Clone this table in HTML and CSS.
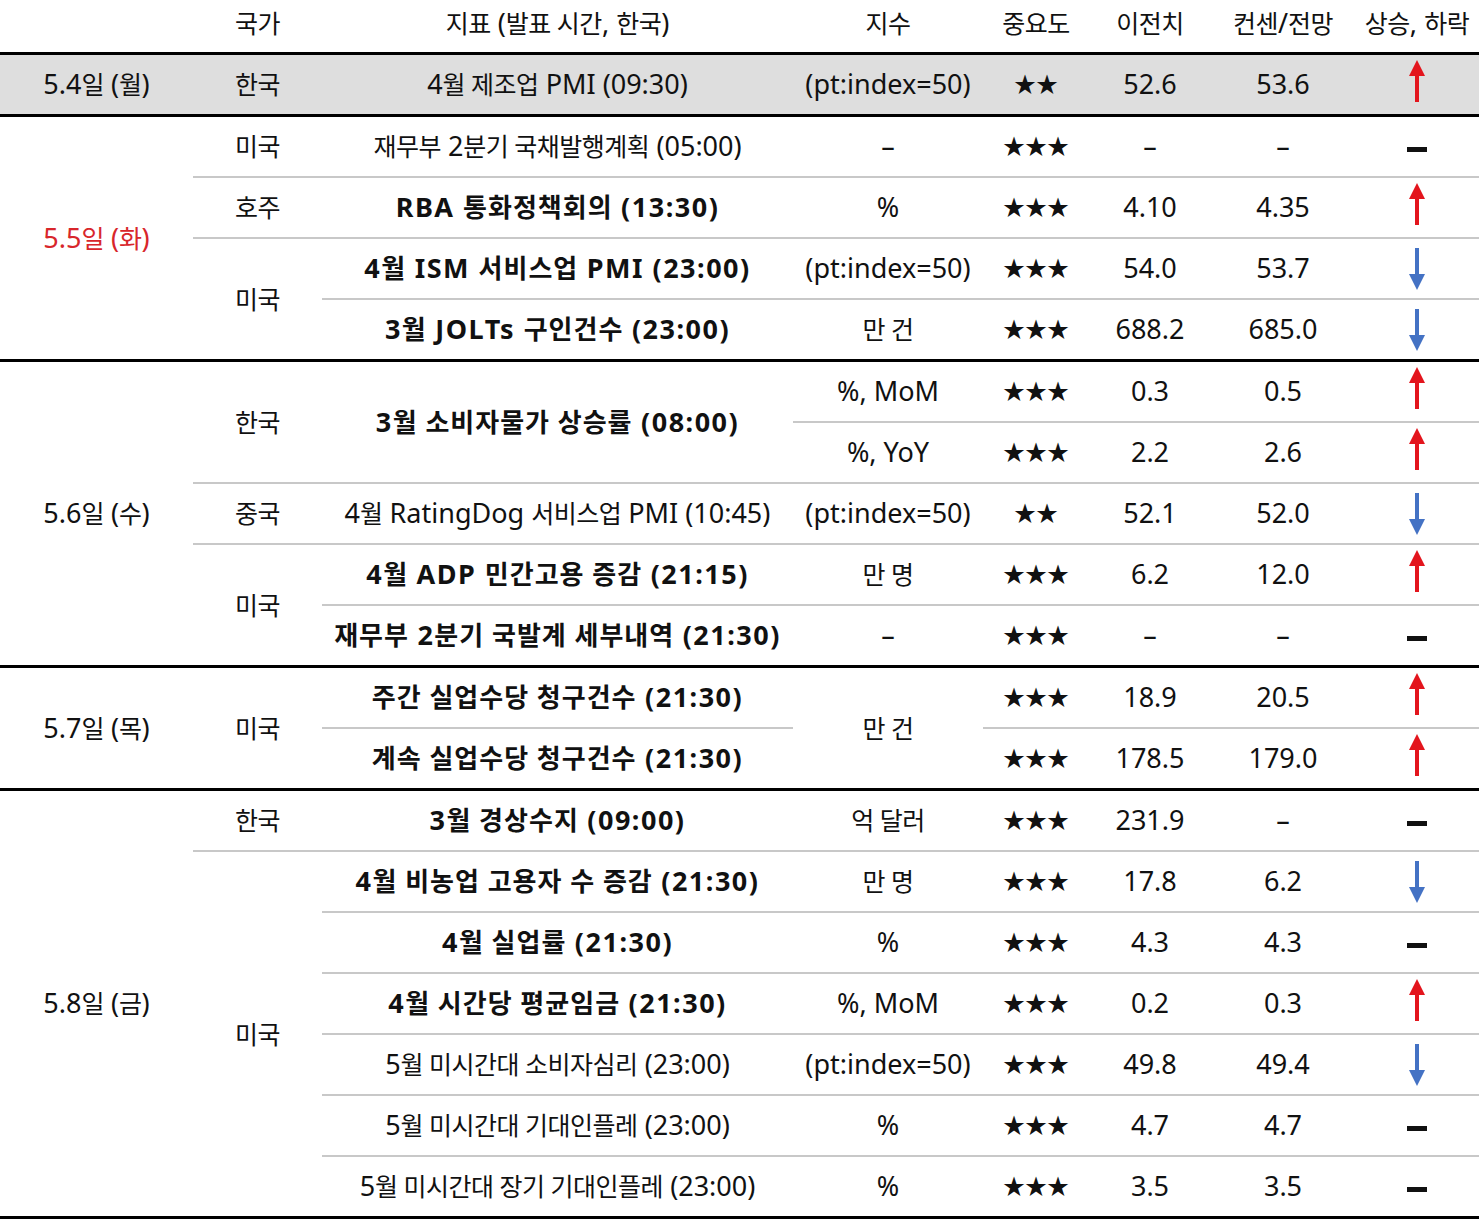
FILE: index.html
```html
<!DOCTYPE html>
<html lang="ko">
<head>
<meta charset="utf-8">
<title>주간 경제지표 일정</title>
<link rel="stylesheet" href="styles.css">
</head>
<body>
<table class="cal">
  <colgroup>
    <col class="c-date"><col class="c-cty"><col class="c-ind"><col class="c-unit"><col class="c-imp"><col class="c-prev"><col class="c-cons"><col class="c-dir">
  </colgroup>
  <thead>
    <tr>
      <th></th>
      <th><span class="k">국가</span></th>
      <th><span class="k">지표</span> (<span class="k">발표 시간</span>, <span class="k">한국</span>)</th>
      <th><span class="k">지수</span></th>
      <th><span class="k">중요도</span></th>
      <th><span class="k">이전치</span></th>
      <th><span class="k">컨센</span>/<span class="k">전망</span></th>
      <th><span class="k">상승</span>, <span class="k">하락</span></th>
    </tr>
  </thead>

  <tbody class="gray">
    <tr>
      <td>5.4<span class="k">일</span> (<span class="k">월</span>)</td>
      <td><span class="k">한국</span></td>
      <td>4<span class="k">월 제조업</span> PMI (09:30)</td>
      <td>(pt:index=50)</td>
      <td class="st">★★</td>
      <td>52.6</td>
      <td>53.6</td>
      <td><svg class="arr up" viewBox="0 0 20 42"><path d="M10 0 L18 16 L12 16 L12 42 L8 42 L8 16 L2 16 Z"/></svg></td>
    </tr>
  </tbody>

  <tbody>
    <tr>
      <td rowspan="4" class="red">5.5<span class="k">일</span> (<span class="k">화</span>)</td>
      <td><span class="k">미국</span></td>
      <td><span class="k">재무부</span> 2<span class="k">분기 국채발행계획</span> (05:00)</td>
      <td>–</td>
      <td class="st">★★★</td>
      <td>–</td>
      <td>–</td>
      <td><span class="dash"></span></td>
    </tr>
    <tr>
      <td><span class="k">호주</span></td>
      <td class="b">RBA <span class="k">통화정책회의</span> (13:30)</td>
      <td>%</td>
      <td class="st">★★★</td>
      <td>4.10</td>
      <td>4.35</td>
      <td><svg class="arr up" viewBox="0 0 20 42"><path d="M10 0 L18 16 L12 16 L12 42 L8 42 L8 16 L2 16 Z"/></svg></td>
    </tr>
    <tr>
      <td rowspan="2"><span class="k">미국</span></td>
      <td class="b">4<span class="k">월</span> ISM <span class="k">서비스업</span> PMI (23:00)</td>
      <td>(pt:index=50)</td>
      <td class="st">★★★</td>
      <td>54.0</td>
      <td>53.7</td>
      <td><svg class="arr down" viewBox="0 0 20 42"><path d="M10 42 L18 26 L12 26 L12 0 L8 0 L8 26 L2 26 Z"/></svg></td>
    </tr>
    <tr>
      <td class="b">3<span class="k">월</span> JOLTs <span class="k">구인건수</span> (23:00)</td>
      <td><span class="k">만 건</span></td>
      <td class="st">★★★</td>
      <td>688.2</td>
      <td>685.0</td>
      <td><svg class="arr down" viewBox="0 0 20 42"><path d="M10 42 L18 26 L12 26 L12 0 L8 0 L8 26 L2 26 Z"/></svg></td>
    </tr>
  </tbody>

  <tbody>
    <tr>
      <td rowspan="5">5.6<span class="k">일</span> (<span class="k">수</span>)</td>
      <td rowspan="2"><span class="k">한국</span></td>
      <td rowspan="2" class="b">3<span class="k">월 소비자물가 상승률</span> (08:00)</td>
      <td>%, MoM</td>
      <td class="st">★★★</td>
      <td>0.3</td>
      <td>0.5</td>
      <td><svg class="arr up" viewBox="0 0 20 42"><path d="M10 0 L18 16 L12 16 L12 42 L8 42 L8 16 L2 16 Z"/></svg></td>
    </tr>
    <tr>
      <td>%, YoY</td>
      <td class="st">★★★</td>
      <td>2.2</td>
      <td>2.6</td>
      <td><svg class="arr up" viewBox="0 0 20 42"><path d="M10 0 L18 16 L12 16 L12 42 L8 42 L8 16 L2 16 Z"/></svg></td>
    </tr>
    <tr>
      <td><span class="k">중국</span></td>
      <td>4<span class="k">월</span> RatingDog <span class="k">서비스업</span> PMI (10:45)</td>
      <td>(pt:index=50)</td>
      <td class="st">★★</td>
      <td>52.1</td>
      <td>52.0</td>
      <td><svg class="arr down" viewBox="0 0 20 42"><path d="M10 42 L18 26 L12 26 L12 0 L8 0 L8 26 L2 26 Z"/></svg></td>
    </tr>
    <tr>
      <td rowspan="2"><span class="k">미국</span></td>
      <td class="b">4<span class="k">월</span> ADP <span class="k">민간고용 증감</span> (21:15)</td>
      <td><span class="k">만 명</span></td>
      <td class="st">★★★</td>
      <td>6.2</td>
      <td>12.0</td>
      <td><svg class="arr up" viewBox="0 0 20 42"><path d="M10 0 L18 16 L12 16 L12 42 L8 42 L8 16 L2 16 Z"/></svg></td>
    </tr>
    <tr>
      <td class="b"><span class="k">재무부</span> 2<span class="k">분기 국발계 세부내역</span> (21:30)</td>
      <td>–</td>
      <td class="st">★★★</td>
      <td>–</td>
      <td>–</td>
      <td><span class="dash"></span></td>
    </tr>
  </tbody>

  <tbody>
    <tr>
      <td rowspan="2">5.7<span class="k">일</span> (<span class="k">목</span>)</td>
      <td rowspan="2"><span class="k">미국</span></td>
      <td class="b"><span class="k">주간 실업수당 청구건수</span> (21:30)</td>
      <td rowspan="2"><span class="k">만 건</span></td>
      <td class="st">★★★</td>
      <td>18.9</td>
      <td>20.5</td>
      <td><svg class="arr up" viewBox="0 0 20 42"><path d="M10 0 L18 16 L12 16 L12 42 L8 42 L8 16 L2 16 Z"/></svg></td>
    </tr>
    <tr>
      <td class="b"><span class="k">계속 실업수당 청구건수</span> (21:30)</td>
      <td class="st">★★★</td>
      <td>178.5</td>
      <td>179.0</td>
      <td><svg class="arr up" viewBox="0 0 20 42"><path d="M10 0 L18 16 L12 16 L12 42 L8 42 L8 16 L2 16 Z"/></svg></td>
    </tr>
  </tbody>

  <tbody class="last">
    <tr>
      <td rowspan="7">5.8<span class="k">일</span> (<span class="k">금</span>)</td>
      <td><span class="k">한국</span></td>
      <td class="b">3<span class="k">월 경상수지</span> (09:00)</td>
      <td><span class="k">억 달러</span></td>
      <td class="st">★★★</td>
      <td>231.9</td>
      <td>–</td>
      <td><span class="dash"></span></td>
    </tr>
    <tr>
      <td rowspan="6"><span class="k">미국</span></td>
      <td class="b">4<span class="k">월 비농업 고용자 수 증감</span> (21:30)</td>
      <td><span class="k">만 명</span></td>
      <td class="st">★★★</td>
      <td>17.8</td>
      <td>6.2</td>
      <td><svg class="arr down" viewBox="0 0 20 42"><path d="M10 42 L18 26 L12 26 L12 0 L8 0 L8 26 L2 26 Z"/></svg></td>
    </tr>
    <tr>
      <td class="b">4<span class="k">월 실업률</span> (21:30)</td>
      <td>%</td>
      <td class="st">★★★</td>
      <td>4.3</td>
      <td>4.3</td>
      <td><span class="dash"></span></td>
    </tr>
    <tr>
      <td class="b">4<span class="k">월 시간당 평균임금</span> (21:30)</td>
      <td>%, MoM</td>
      <td class="st">★★★</td>
      <td>0.2</td>
      <td>0.3</td>
      <td><svg class="arr up" viewBox="0 0 20 42"><path d="M10 0 L18 16 L12 16 L12 42 L8 42 L8 16 L2 16 Z"/></svg></td>
    </tr>
    <tr>
      <td>5<span class="k">월 미시간대 소비자심리</span> (23:00)</td>
      <td>(pt:index=50)</td>
      <td class="st">★★★</td>
      <td>49.8</td>
      <td>49.4</td>
      <td><svg class="arr down" viewBox="0 0 20 42"><path d="M10 42 L18 26 L12 26 L12 0 L8 0 L8 26 L2 26 Z"/></svg></td>
    </tr>
    <tr>
      <td>5<span class="k">월 미시간대 기대인플레</span> (23:00)</td>
      <td>%</td>
      <td class="st">★★★</td>
      <td>4.7</td>
      <td>4.7</td>
      <td><span class="dash"></span></td>
    </tr>
    <tr>
      <td>5<span class="k">월 미시간대 장기 기대인플레</span> (23:00)</td>
      <td>%</td>
      <td class="st">★★★</td>
      <td>3.5</td>
      <td>3.5</td>
      <td><span class="dash"></span></td>
    </tr>
  </tbody>
</table>
</body>
</html>
```

FILE: styles.css
```css
html, body {
  margin: 0;
  padding: 0;
  background: #ffffff;
}

body {
  font-family: "Noto Sans", "Noto Sans CJK KR", sans-serif;
  color: #111111;
}

.cal {
  width: 1479px;
  border-collapse: collapse;
  table-layout: fixed;
}

.c-date { width: 193px; }
.c-cty  { width: 129px; }
.c-ind  { width: 471px; }
.c-unit { width: 190px; }
.c-imp  { width: 106px; }
.c-prev { width: 122px; }
.c-cons { width: 144px; }
.c-dir  { width: 124px; }

.cal th,
.cal td {
  padding: 0;
  text-align: center;
  vertical-align: middle;
  font-size: 27px;
  font-weight: 400;
  line-height: 1.2;
  white-space: nowrap;
}

.cal th {
  height: 46px;
  padding-bottom: 6px;
}

.cal td {
  height: 59px;
  border-bottom: 2px solid #c8c8c8;
}

.cal thead {
  border-bottom: 3px solid #000000;
}

.cal tbody {
  border-bottom: 3px solid #000000;
}

.cal tbody.last {
  border-bottom: 5px solid #000000;
}

.cal tbody.gray td {
  background: #dedede;
}

.k {
  font-size: 25px;
  letter-spacing: -0.5px;
}

.cal td.b {
  font-weight: 700;
  letter-spacing: 1.5px;
}

.cal td.b .k {
  font-size: 26px;
  letter-spacing: 1px;
}

.red {
  color: #d8262b;
}

.cal td.st {
  font-family: "Noto Sans CJK KR", sans-serif;
  font-size: 22px;
  letter-spacing: 0;
  padding-bottom: 4px;
  height: 55px;
}

.dash {
  display: inline-block;
  width: 20px;
  height: 5px;
  background: #111111;
  vertical-align: middle;
}

.arr {
  display: block;
  width: 20px;
  height: 42px;
  margin: 0 auto;
}

.arr.up {
  fill: #e3151d;
  position: relative;
  top: -4px;
}

.arr.down {
  fill: #4472c4;
}
```
